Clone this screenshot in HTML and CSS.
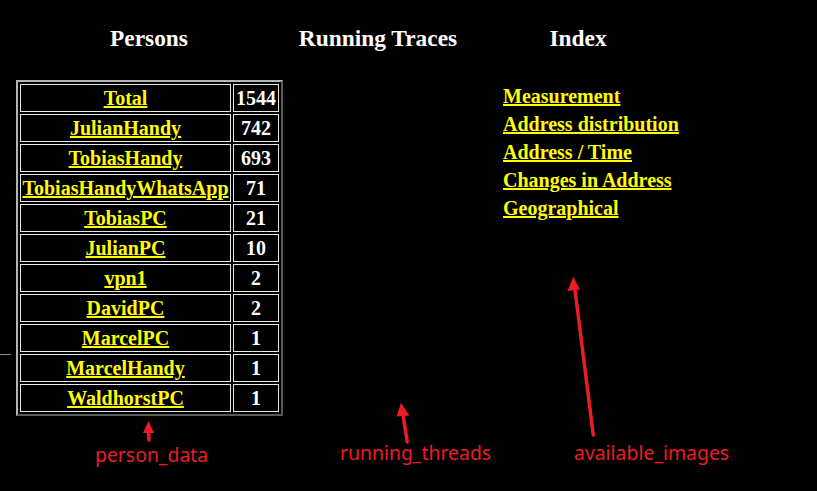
FILE: index.html
```html
<!DOCTYPE html>
<html>
<head>
<meta charset="utf-8">
<title>Traces</title>
<link rel="stylesheet" href="styles.css">
</head>
<body>
<div class="page">
  <div class="col col-persons">
    <h3 class="heading">Persons</h3>
    <table class="persons">
      <tr><td class="name"><a href="#">Total</a></td><td class="num">1544</td></tr>
      <tr><td class="name"><a href="#">JulianHandy</a></td><td class="num">742</td></tr>
      <tr><td class="name"><a href="#">TobiasHandy</a></td><td class="num">693</td></tr>
      <tr><td class="name"><a href="#">TobiasHandyWhatsApp</a></td><td class="num">71</td></tr>
      <tr><td class="name"><a href="#">TobiasPC</a></td><td class="num">21</td></tr>
      <tr><td class="name"><a href="#">JulianPC</a></td><td class="num">10</td></tr>
      <tr><td class="name"><a href="#">vpn1</a></td><td class="num">2</td></tr>
      <tr><td class="name"><a href="#">DavidPC</a></td><td class="num">2</td></tr>
      <tr><td class="name"><a href="#">MarcelPC</a></td><td class="num">1</td></tr>
      <tr><td class="name"><a href="#">MarcelHandy</a></td><td class="num">1</td></tr>
      <tr><td class="name"><a href="#">WaldhorstPC</a></td><td class="num">1</td></tr>
    </table>
  </div>
  <div class="col col-traces">
    <h3 class="heading">Running Traces</h3>
  </div>
  <div class="col col-index">
    <h3 class="heading">Index</h3>
    <div class="links">
      <a href="#">Measurement</a>
      <a href="#">Address distribution</a>
      <a href="#">Address / Time</a>
      <a href="#">Changes in Address</a>
      <a href="#">Geographical</a>
    </div>
  </div>
</div>
<div class="tick"></div>
<svg class="annotations" width="817" height="491" viewBox="0 0 817 491">
  <g class="arrow">
    <line x1="149" y1="440" x2="148.5" y2="430"/>
    <polygon points="148.5,421 143,433 154,433"/>
    <line x1="407.3" y1="442" x2="402.5" y2="412"/>
    <polygon points="401,402.7 396.5,416.5 409.3,415.5"/>
    <line x1="593.3" y1="435" x2="574.5" y2="286"/>
    <polygon points="573.3,276.7 567.5,291 580,289.5"/>
  </g>
  <text class="label" x="95" y="462">person_data</text>
  <text class="label" x="340" y="460">running_threads</text>
  <text class="label" x="574" y="460">available_images</text>
</svg>
</body>
</html>
```
FILE: styles.css
```css
html, body {
  margin: 0;
  padding: 0;
  background: #000;
}
body {
  width: 817px;
  height: 491px;
  overflow: hidden;
  position: relative;
  font-family: "Liberation Serif", "Times New Roman", serif;
  font-size: 20px;
  font-weight: bold;
  color: #fff;
}
.page {
  display: grid;
  grid-template-columns: 266px 192px 208px;
  align-items: start;
  padding: 25px 0 0 16px;
}
.col {
  display: flex;
  flex-direction: column;
}
.heading {
  margin: 0 0 28px 0;
  font-size: 23.4px;
  font-weight: bold;
  text-align: center;
  color: #fff;
  white-space: nowrap;
  line-height: 27px;
}
a {
  color: #ffff00;
  text-decoration: underline;
}
.persons {
  border-collapse: separate;
  border-spacing: 2px;
  border-width: 2px;
  border-style: solid;
  border-color: #b4b4b4 #5a5a5a #5a5a5a #b4b4b4;
  width: 267px;
  table-layout: fixed;
}
.persons td {
  border: 1px solid #e6e6e6;
  padding: 1px 2px;
  line-height: 24px;
  text-align: center;
  white-space: nowrap;
}
.persons .name {
  padding: 1px 0;
}
.persons .num {
  color: #fff;
  width: 40px;
}
.links {
  display: flex;
  flex-direction: column;
  align-items: flex-start;
  padding: 2px 0 0 29px;
}
.links a {
  line-height: 28px;
  white-space: nowrap;
}
.tick {
  position: absolute;
  left: 0;
  top: 354px;
  width: 11px;
  height: 1px;
  background: #8a8a8a;
}
.annotations {
  position: absolute;
  left: 0;
  top: 0;
  pointer-events: none;
}
.arrow line {
  stroke: #ec1c24;
  stroke-width: 3.5;
  stroke-linecap: round;
}
.arrow polygon {
  fill: #ec1c24;
}
.label {
  fill: #ec1c24;
  font-family: "Noto Sans", "Open Sans", sans-serif;
  font-size: 19.4px;
  font-weight: normal;
}
```
